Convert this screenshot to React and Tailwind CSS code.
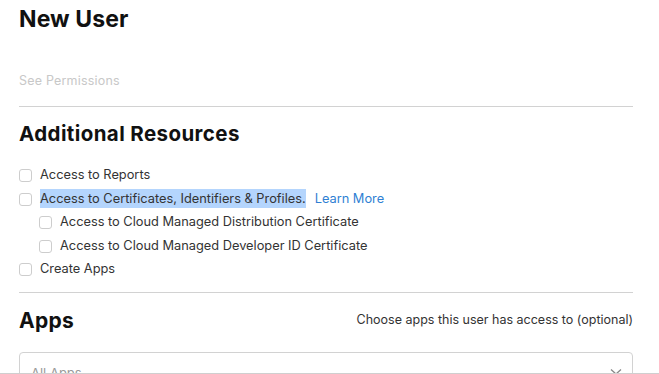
import React from "react";

const Box = ({ className = "" }) => (
  <span
    className={
      "inline-block w-[13px] h-[13px] rounded-[3px] border border-[#cdcdcd] bg-white shrink-0 " +
      className
    }
  ></span>
);

const Row = ({ indent, children }) => (
  <div className={"flex items-center h-[23.5px] " + (indent ? "pl-[20px]" : "")}>
    <Box />
    <div className="ml-[8px] text-[12.8px] text-[#333] leading-none">{children}</div>
  </div>
);

export default function App() {
  return (
    <div
      className="h-[374px] w-[659px] overflow-hidden bg-white flex flex-col"
      style={{ fontFamily: "Inter, 'Liberation Sans', sans-serif" }}
    >
      <div className="flex-1 overflow-hidden pl-[19px] pr-[26px]">
        <h1 className="text-[23px] font-bold text-[#111] leading-none pt-[8px] tracking-[0.1px]">
          New User
        </h1>
        <p className="text-[12.5px] text-[#c8c8c8] mt-[44px] leading-none tracking-[0.2px]">See Permissions</p>
        <div className="border-t border-[#d2d2d2] mt-[18px]"></div>

        <h2 className="text-[20.5px] font-bold text-[#111] leading-none mt-[17px] tracking-[0.4px]">
          Additional Resources
        </h2>
        <div className="mt-[20px]">
          <Row>Access to Reports</Row>
          <Row>
            <span className="bg-[#b4d5fd] py-[2px]">Access to Certificates, Identifiers &amp; Profiles.</span>
            <span className="ml-[9px] text-[#2f7fd3]">Learn More</span>
          </Row>
          <Row indent>Access to Cloud Managed Distribution Certificate</Row>
          <Row indent>Access to Cloud Managed Developer ID Certificate</Row>
          <Row>Create Apps</Row>
        </div>
        <div className="border-t border-[#d2d2d2] mt-[10px]"></div>

        <div className="flex items-center justify-between mt-[17px]">
          <h2 className="text-[21px] font-bold text-[#111] leading-none tracking-[0.3px]">Apps</h2>
          <span className="text-[12.5px] text-[#333] leading-none">
            Choose apps this user has access to (optional)
          </span>
        </div>

        <div className="mt-[21px] h-[40px] border border-[#d2d2d2] rounded-[4px] flex items-start justify-between pl-[11px] pr-[10px]">
          <span className="text-[13px] text-[#9a9a9a] leading-none mt-[14px]">All Apps</span>
          <svg width="12" height="8" viewBox="0 0 12 8" className="mt-[15px]">
            <path d="M1 1.5 L6 6 L11 1.5" fill="none" stroke="#888" strokeWidth="1.3" />
          </svg>
        </div>
      </div>
      <div className="border-t border-[#cfcfcf] h-[1px]"></div>
    </div>
  );
}
